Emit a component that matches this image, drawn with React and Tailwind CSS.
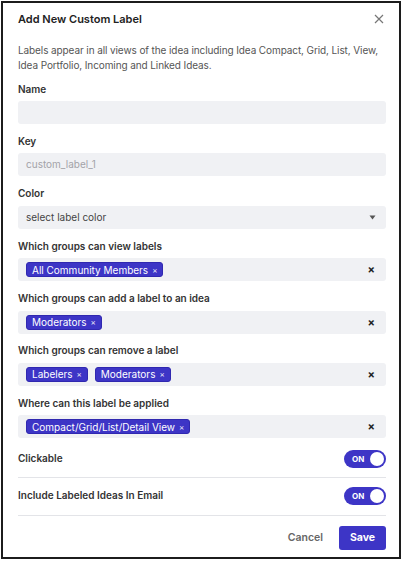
import React from 'react';

const font = { fontFamily: 'Inter, "Noto Sans", sans-serif' };

function Chip({ children }) {
    return (
        <span className="inline-flex items-center gap-[4px] h-[15px] px-[5px] rounded-[3px] bg-[#3d35c6] border border-[#3028b0] text-white text-[10px] leading-none">
            {children}
            <span className="text-[8px] leading-none opacity-90">×</span>
        </span>
    );
}

function Field({ label, children }) {
    return (
        <div className="mb-[10.4px]">
            <div className="h-[14px] flex items-center text-[10px] font-semibold text-[#333]">{label}</div>
            <div className="mt-[5px]">{children}</div>
        </div>
    );
}

function Box({ children, className = '' }) {
    return (
        <div className={`h-[23px] rounded-[3px] bg-[#f0f1f4] flex items-center px-[8px] ${className}`}>{children}</div>
    );
}

function MultiBox({ chips }) {
    return (
        <Box className="justify-between">
            <div className="flex items-center gap-[7px]">
                {chips.map((c) => (
                    <Chip key={c}>{c}</Chip>
                ))}
            </div>
            <span className="text-[11px] font-bold text-[#222] leading-none mr-[3px]">×</span>
        </Box>
    );
}

function Toggle() {
    return (
        <div className="w-[42px] h-[18px] rounded-full bg-[#3d35c6] flex items-center justify-between pl-[8px] pr-[2px]">
            <span className="text-[8px] font-bold text-white leading-none">ON</span>
            <span className="w-[14px] h-[14px] rounded-full bg-white" />
        </div>
    );
}

export default function App() {
    return (
        <div className="w-[402px] h-[561px] bg-white pt-px pl-px" style={font}>
            <div className="w-[400px] h-[558px] border-2 border-[#1c1c1c] pt-[8px] pl-[15px] pr-[13px] pb-[8px] flex flex-col">
                <div className="flex items-center justify-between h-[16px]">
                    <h2 className="text-[11px] font-semibold text-[#222]">Add New Custom Label</h2>
                    <svg width="10" height="10" viewBox="0 0 10 10" className="mr-[2px]">
                        <path d="M1 1L9 9M9 1L1 9" stroke="#777" strokeWidth="1.2" />
                    </svg>
                </div>

                <p className="mt-[16px] text-[10px] tracking-[-0.1px] leading-[15px] text-[#555]">
                    Labels appear in all views of the idea including Idea Compact, Grid, List, View, Idea Portfolio, Incoming and Linked Ideas.
                </p>

                <div className="mt-[9px]">
                    <Field label="Name">
                        <Box />
                    </Field>
                    <Field label="Key">
                        <Box>
                            <span className="text-[10px] text-[#a3a3a8]">custom_label_1</span>
                        </Box>
                    </Field>
                    <Field label="Color">
                        <Box className="justify-between">
                            <span className="text-[10px] text-[#444]">select label color</span>
                            <svg width="7" height="5" viewBox="0 0 7 5" className="mr-[2px]">
                                <path d="M0.5 0.5H6.5L3.5 4.5Z" fill="#555" />
                            </svg>
                        </Box>
                    </Field>
                    <Field label="Which groups can view labels">
                        <MultiBox chips={['All Community Members']} />
                    </Field>
                    <Field label="Which groups can add a label to an idea">
                        <MultiBox chips={['Moderators']} />
                    </Field>
                    <Field label="Which groups can remove a label">
                        <MultiBox chips={['Labelers', 'Moderators']} />
                    </Field>
                    <Field label="Where can this label be applied">
                        <MultiBox chips={['Compact/Grid/List/Detail View']} />
                    </Field>
                </div>

                <div className="-mt-[10px] flex items-center justify-between pt-[11px] pb-[9px] border-b border-[#e3e4e8]">
                    <span className="text-[10px] font-semibold text-[#333]">Clickable</span>
                    <Toggle />
                </div>
                <div className="flex items-center justify-between pt-[9px] pb-[10px] border-b border-[#e3e4e8]">
                    <span className="text-[10px] font-semibold text-[#333]">Include Labeled Ideas In Email</span>
                    <Toggle />
                </div>

                <div className="flex items-center justify-end gap-[16px] pt-[10px]">
                    <button className="text-[10.5px] font-semibold text-[#666]">Cancel</button>
                    <button className="w-[47px] h-[24px] rounded-[3px] bg-[#3d35c6] text-white text-[10.5px] font-bold">Save</button>
                </div>
            </div>
        </div>
    );
}
